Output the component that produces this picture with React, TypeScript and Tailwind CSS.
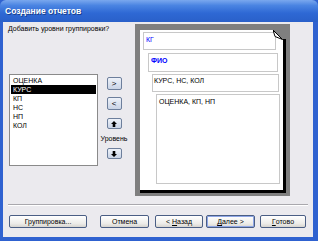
import React from "react";

const font = { fontFamily: '"Liberation Sans", Arial, sans-serif' };

function XpButton({
  children,
  className = "",
  def = false,
}: {
  children: React.ReactNode;
  className?: string;
  def?: boolean;
}) {
  return (
    <div
      className={
        "flex items-center justify-center h-[13px] rounded-[2px] border border-[#4a5e84] bg-[linear-gradient(#ffffff,#ecebe8_70%,#d6d4cf)] text-[7px] leading-none text-black " +
        (def ? "shadow-[inset_0_0_0_1px_#8fa6e6] " : "") +
        className
      }
    >
      {children}
    </div>
  );
}

function SmallBtn({ children, h = "h-[13px]" }: { children: React.ReactNode; h?: string }) {
  return (
    <div
      className={
        "w-[15px] " +
        h +
        " flex items-center justify-center rounded-[2px] border border-[#6d7f9c] bg-[linear-gradient(#eef2f9,#c9d4e6)] text-[8px] leading-none text-black"
      }
    >
      {children}
    </div>
  );
}

function Arrow({ down = false }: { down?: boolean }) {
  return (
    <svg width="6" height="6" viewBox="0 0 6 6" style={{ transform: down ? "rotate(180deg)" : undefined }}>
      <polygon points="3,0 6,3 4.3,3 4.3,6 1.7,6 1.7,3 0,3" fill="#000" />
    </svg>
  );
}

export default function App() {
  const items = ["ОЦЕНКА", "КУРС", "КП", "НС", "НП", "КОЛ"];
  return (
    <div className="w-[318px] h-[241px] bg-[#2f62d0] flex flex-col overflow-hidden" style={font}>
      {/* title bar */}
      <div className="h-[22px] shrink-0 rounded-t-[6px] bg-[linear-gradient(#7aa8ee,#4a84e2_25%,#2e68d4_60%,#2a60c9)] flex items-center pl-[5px]">
        <span className="text-white font-bold text-[8.5px] leading-none [text-shadow:1px_1px_0_#1a3f8c]">
          Создание отчетов
        </span>
      </div>

      {/* body */}
      <div className="flex-1 ml-[3px] mr-[5px] mb-[4px] bg-[#ebeaee] flex flex-col">
        <div className="h-[182px] flex">
          {/* left part */}
          <div className="w-[132px] pl-[5px] flex flex-col">
            <div className="mt-[2px] h-[9px] text-[7px] leading-[9px] text-black whitespace-nowrap">
              Добавить уровни группировки?
            </div>
            <div className="mt-[41px] flex">
              <div className="ml-[1px] w-[89px] h-[92px] bg-white border border-[#8a8a8a] pt-[1px]">
                {items.map((it) => (
                  <div
                    key={it}
                    className={
                      "h-[9px] pl-[2px] text-[7px] leading-[9px] mx-[1px] " +
                      (it === "КУРС" ? "bg-black text-white" : "text-black")
                    }
                  >
                    {it}
                  </div>
                ))}
              </div>
              <div className="ml-[2px] w-[28px] flex flex-col items-center pt-[3px]">
                <SmallBtn>&gt;</SmallBtn>
                <div className="mt-[7px]">
                  <SmallBtn>&lt;</SmallBtn>
                </div>
                <div className="mt-[8px]">
                  <SmallBtn h="h-[11px]">
                    <Arrow />
                  </SmallBtn>
                </div>
                <div className="mt-[6px] h-[8px] text-[7px] leading-[8px] text-black">Уровень</div>
                <div className="mt-[5px]">
                  <SmallBtn h="h-[11px]">
                    <Arrow down />
                  </SmallBtn>
                </div>
              </div>
            </div>
          </div>

          {/* preview */}
          <div className="mt-[2px] w-[155px] h-[172px] bg-[#7f7f7f] pl-[5px] pt-[6px]">
            <div className="relative w-[146px] h-[163px] bg-white border-r-[3px] border-b-[3px] border-black flex flex-col">
              <div className="ml-[3px] mt-[2px] w-[133px] h-[18px] border border-[#c8c8c8] pl-[2px] pt-[2px] text-[7px] leading-[9px] text-[#0000ff]">
                КГ
              </div>
              <div className="ml-[8px] mt-[3px] w-[130px] h-[19px] border border-[#c8c8c8] pl-[2px] pt-[2px] text-[7px] leading-[9px] font-bold text-[#0000ff]">
                ФИО
              </div>
              <div className="ml-[12px] mt-[2px] w-[127px] h-[18px] border border-[#c8c8c8] pl-[1px] pt-[1px] text-[7px] leading-[9px] text-black">
                КУРС, НС, КОЛ
              </div>
              <div className="ml-[16px] mt-[2px] w-[124px] h-[90px] border border-[#c8c8c8] pl-[2px] pt-[2px] text-[7px] leading-[9px] text-black">
                ОЦЕНКА, КП, НП
              </div>
              {/* folded corner */}
              <svg
                className="absolute top-0 right-[-3px]"
                width="13"
                height="10"
                viewBox="0 0 13 10"
              >
                <polygon points="0,0 13,0 13,10 10,10" fill="#7f7f7f" />
                <polygon points="0,0 9.5,9.5 2,6.5" fill="#ffffff" stroke="#000" strokeWidth="1" />
                <rect x="10" y="9" width="3" height="1" fill="#000" />
              </svg>
            </div>
          </div>
        </div>

        {/* separator */}
        <div className="mx-[5px] h-[2px] border-t border-[#a9a8ad] border-b border-b-white" />

        {/* buttons */}
        <div className="mt-[9px] flex">
          <XpButton className="ml-[6px] w-[78px]">Группировка...</XpButton>
          <XpButton className="ml-[13px] w-[49px]">Отмена</XpButton>
          <XpButton className="ml-[6px] w-[48px]">
            &lt; <span className="underline ml-[2px]">Н</span>азад
          </XpButton>
          <XpButton def className="ml-[3px] w-[49px]">
            <span className="underline">Д</span>алее &gt;
          </XpButton>
          <XpButton className="ml-[5px] w-[46px]">
            <span className="underline">Г</span>отово
          </XpButton>
        </div>
      </div>
    </div>
  );
}
